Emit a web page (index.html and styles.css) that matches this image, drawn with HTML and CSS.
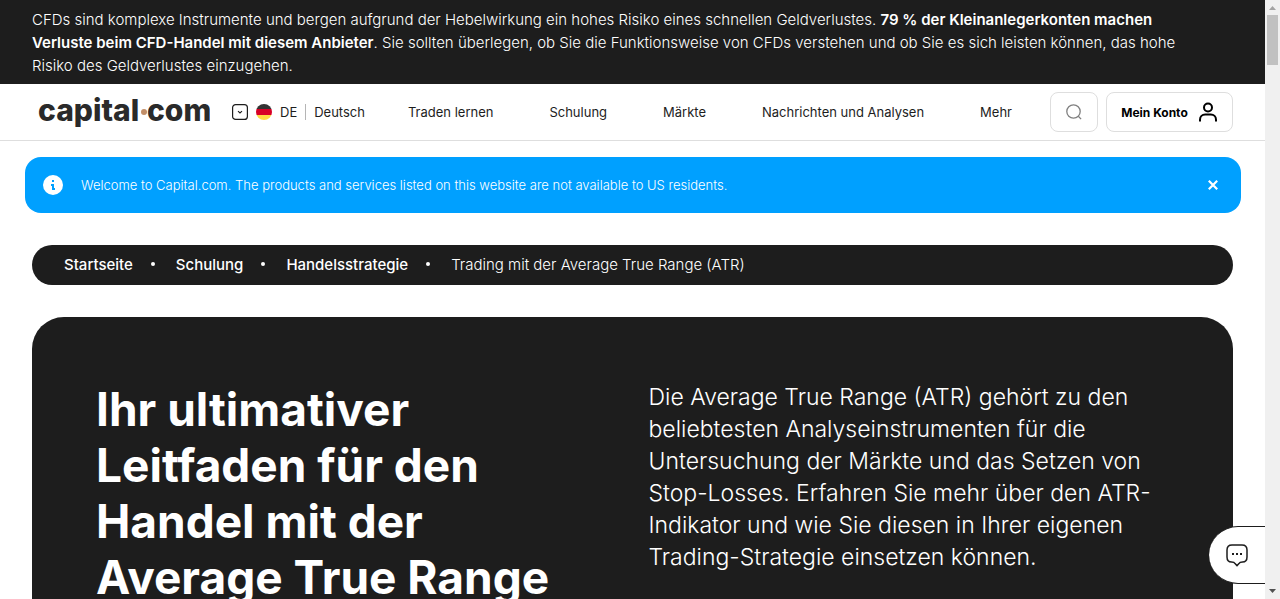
FILE: index.html
```html
<!DOCTYPE html>
<html lang="de">
<head>
<meta charset="utf-8">
<meta name="viewport" content="width=device-width, initial-scale=1">
<title>Trading mit der Average True Range (ATR)</title>
<link rel="stylesheet" href="styles.css">
</head>
<body>
<div class="page">
  <p class="risk">CFDs sind komplexe Instrumente und bergen aufgrund der Hebelwirkung ein hohes Risiko eines schnellen Geldverlustes. <strong>79 % der Kleinanlegerkonten machen<br>Verluste beim CFD-Handel mit diesem Anbieter</strong>. Sie sollten überlegen, ob Sie die Funktionsweise von CFDs verstehen und ob Sie es sich leisten können, das hohe<br>Risiko des Geldverlustes einzugehen.</p>
  <header class="header">
    <a class="logo" href="#" aria-label="capital.com">
      <svg width="172" height="40" viewBox="0 0 172 40" aria-hidden="true">
        <text class="logo-text" x="0" y="29">capital</text>
        <circle cx="106" cy="20" r="3" fill="#c28e67"/>
        <text class="logo-text" x="109" y="29">com</text>
      </svg>
    </a>
    <button class="language" type="button">
      <svg width="16" height="16" viewBox="0 0 16 16" fill="none" stroke="#1d1d1d" aria-hidden="true"><rect x=".6" y=".6" width="14.8" height="14.8" rx="3" stroke-width="1.2"/><path d="M6 7.2l2 1.8 2-1.8" stroke-width="1.1"/></svg>
      <svg width="16" height="16" viewBox="0 0 16 16" aria-hidden="true"><clipPath id="flag"><circle cx="8" cy="8" r="8"/></clipPath><g clip-path="url(#flag)"><path fill="#333" d="M0 0h16v5H0z"/><path fill="#d80027" d="M0 5h16v6H0z"/><path fill="#ffda44" d="M0 11h16v5H0z"/></g></svg>
      <span>DE</span>
      <span class="language-name">Deutsch</span>
    </button>
    <nav class="nav">
      <a href="#">Traden lernen</a>
      <a href="#">Schulung</a>
      <a href="#">Märkte</a>
      <a href="#">Nachrichten und Analysen</a>
      <a href="#">Mehr</a>
    </nav>
    <div class="actions">
      <button class="box-button" type="button" aria-label="Suche">
        <svg width="16" height="16" viewBox="0 0 16 16" fill="none" stroke="#808080" stroke-width="1.3" aria-hidden="true"><circle cx="7.5" cy="7.5" r="6.7"/><path d="M12.3 12.3l2.8 2.8"/></svg>
      </button>
      <button class="box-button account" type="button">Mein Konto
        <svg width="20" height="20" viewBox="0 0 20 20" fill="none" stroke="#000" stroke-width="2" aria-hidden="true"><circle cx="10" cy="5.5" r="4"/><path d="M2 19.5v-1.7c0-3 2.2-5.2 5.2-5.2h5.6c3 0 5.2 2.2 5.2 5.2v1.7"/></svg>
      </button>
    </div>
  </header>
  <div class="notice" role="status">
    <svg width="20" height="20" viewBox="0 0 20 20" aria-hidden="true"><circle cx="10" cy="10" r="10" fill="#fff"/><path fill="#00a0ff" d="M9 5h2v2H9zM8 9h3v4h1v2H9v-4H8z"/></svg>
    <p class="notice-text">Welcome to Capital.com. The products and services listed on this website are not available to US residents.</p>
    <button class="close" type="button" aria-label="Schließen"><svg width="10" height="10" viewBox="0 0 10 10" fill="none" stroke="#fff" stroke-width="2.2" aria-hidden="true"><path d="M.8.8l8.4 8.4M9.2.8L.8 9.2"/></svg></button>
  </div>
  <main class="content">
    <nav class="breadcrumbs" aria-label="Breadcrumb">
      <a href="#">Startseite</a>
      <a href="#">Schulung</a>
      <a href="#">Handelsstrategie</a>
      <span>Trading mit der Average True Range (ATR)</span>
    </nav>
    <section class="hero">
      <h1 class="hero-title">Ihr ultimativer<br>Leitfaden für den<br>Handel mit der<br>Average True Range</h1>
      <p class="hero-text">Die Average True Range (ATR) gehört zu den<br>beliebtesten Analyseinstrumenten für die<br>Untersuchung der Märkte und das Setzen von<br>Stop-Losses. Erfahren Sie mehr über den ATR-<br>Indikator und wie Sie diesen in Ihrer eigenen<br>Trading-Strategie einsetzen können.</p>
    </section>
  </main>
</div>
<button class="chat" type="button" aria-label="Chat">
  <svg width="24" height="24" viewBox="0 0 24 24" fill="none" aria-hidden="true"><path d="M7 2h10q5 0 5 5v7q0 5-4.500 5c-2.500 0-3 .5-3.800 1.800L12 22.700l-1.700-1.900C9.500 19.500 9 19 6.500 19Q2 19 2 14V7q0-5 5-5z" stroke="#1d1d1d" stroke-width="1.500" stroke-linejoin="round"/><path fill="#1d1d1d" d="M7 10h2v2H7zM11 10h2v2h-2zM15 10h2v2h-2z"/></svg>
</button>
<div class="scrollbar" aria-hidden="true">
  <svg width="7" height="4" viewBox="0 0 7 4"><path fill="#a3a3a3" d="M0 4l3.500-4L7 4z"/></svg>
  <div class="scroll-track"><div class="scroll-thumb"></div></div>
  <svg width="7" height="4" viewBox="0 0 7 4"><path fill="#505050" d="M0 0l3.500 4L7 0z"/></svg>
</div>
</body>
</html>
```
FILE: styles.css
```css
* { box-sizing: border-box; }
body {
  margin: 0;
  background: #fff;
  color: #1d1d1d;
  font-family: Inter, "Open Sans", sans-serif;
  font-size: 13px;
}
p, h1 { margin: 0; }
a { color: inherit; text-decoration: none; }
button { font: inherit; color: inherit; background: none; border: 0; padding: 0; cursor: pointer; }
svg { display: block; flex: none; }
.page { height: 100vh; overflow: hidden; padding-right: 15px; }
.risk {
  padding: 8px 32px 7px;
  background: #1d1d1d;
  color: #fff;
  font-size: 15px;
  font-weight: 300;
  line-height: 23px;
  white-space: nowrap;
}
.risk strong { font-weight: 600; }
.header {
  display: flex;
  align-items: center;
  height: 57px;
  padding: 0 32px 0 38px;
  border-bottom: 1px solid #dedede;
}
.logo-text { font: 800 30px Inter, sans-serif; fill: #2a2a2a; }
.language { display: flex; align-items: center; gap: 8px; margin-left: 22px; }
.language-name { padding-left: 8px; border-left: 1px solid #b5b5b5; }
.nav { flex: 1; display: flex; justify-content: space-between; padding: 0 38px 0 43px; white-space: nowrap; }
.actions { display: flex; gap: 8px; }
.box-button {
  display: flex;
  align-items: center;
  justify-content: center;
  width: 48px;
  height: 40px;
  border: 1px solid #dedede;
  border-radius: 8px;
}
.account { width: 127px; gap: 10px; color: #000; font-size: 12px; font-weight: 700; white-space: nowrap; }
.notice {
  display: flex;
  align-items: center;
  min-height: 56px;
  margin: 16px 24px 0 25px;
  padding: 0 23px 0 18px;
  border-radius: 16px;
  background: #00a0ff;
  color: #fff;
  font-weight: 300;
}
.notice-text { flex: 1; padding-left: 18px; }
.content { padding: 32px; }
.breadcrumbs {
  display: flex;
  align-items: center;
  height: 40px;
  padding: 0 32px 2px;
  border-radius: 20px;
  background: #1d1d1d;
  color: #fff;
  font-size: 15px;
  font-weight: 300;
}
.breadcrumbs a { display: flex; align-items: center; font-weight: 500; }
.breadcrumbs a::after {
  content: "";
  width: 4px;
  height: 4px;
  margin: 0 21px 0 18px;
  border-radius: 50%;
  background: #fff;
}
.hero {
  display: grid;
  grid-template-columns: 1fr 1fr;
  gap: 32px;
  margin-top: 32px;
  padding: 64px;
  border-radius: 32px;
  background: #1d1d1d;
  color: #fff;
}
.hero-title { font-size: 46px; font-weight: 700; line-height: 56px; white-space: nowrap; }
.hero-text { font-size: 23px; font-weight: 300; line-height: 32px; white-space: nowrap; }
.chat {
  position: fixed;
  right: 15px;
  bottom: 15px;
  display: flex;
  align-items: center;
  width: 56px;
  height: 58px;
  padding-left: 16px;
  border: 1px solid #1d1d1d;
  border-width: 1px 0;
  border-radius: 29px 0 0 29px;
  background: #fff;
}
.scrollbar {
  position: fixed;
  inset: 0 0 0 auto;
  display: flex;
  flex-direction: column;
  align-items: center;
  width: 15px;
  padding: 6px 0;
  background: #f0f0f0;
}
.scroll-track { flex: 1; padding-top: 5px; }
.scroll-thumb { width: 11px; height: 50px; background: #c1c1c1; }
```
